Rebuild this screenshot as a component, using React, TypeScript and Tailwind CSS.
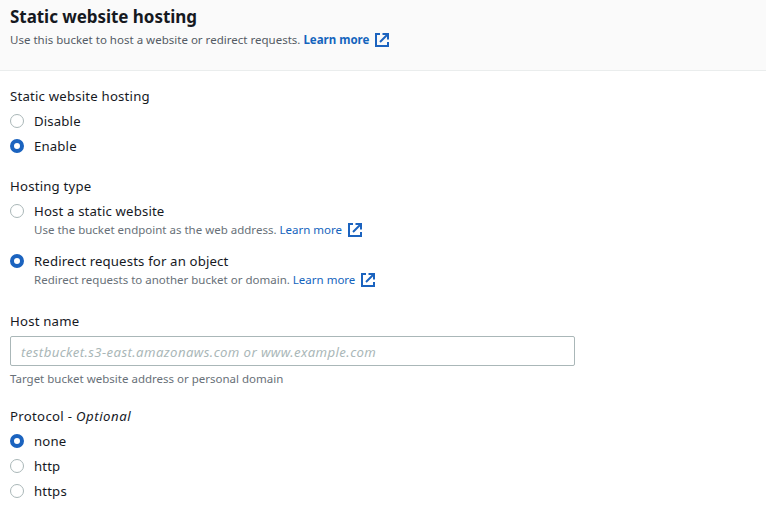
import type { ReactNode } from "react";

function ExternalIcon({ className = "" }: { className?: string }) {
  return (
    <svg viewBox="0 0 14 14" className={`h-[14px] w-[14px] shrink-0 ${className}`} fill="none" stroke="#1b63bf" strokeWidth="2">
      <path d="M5 1H1v12h12V9" />
      <path d="M7.5 1H13v5.5" />
      <path d="M5 9l7.5-7.5" />
    </svg>
  );
}

function Radio({ checked = false, children }: { checked?: boolean; children: ReactNode }) {
  return (
    <label className="flex h-[25px] items-center gap-[10px] text-[13.2px] tracking-[0.15px]">
      <span
        className={
          checked
            ? "mb-px h-[14px] w-[14px] rounded-full border-[4px] border-[#1b63bf] bg-white"
            : "mb-px h-[14px] w-[14px] rounded-full border border-[#aab7b8] bg-white"
        }
      />
      <span>{children}</span>
    </label>
  );
}

function Label({ className = "", children }: { className?: string; children: ReactNode }) {
  return <div className={`h-[25px] text-[13.2px] leading-[25px] tracking-[0.2px] ${className}`}>{children}</div>;
}

function Hint({ children }: { children: ReactNode }) {
  return (
    <div className="-mt-[2px] flex h-[16px] items-center pl-6 text-[11.5px] whitespace-pre text-[#687078]">
      {children}
    </div>
  );
}

export default function App() {
  return (
    <div className="h-[512px] w-[766px] overflow-hidden bg-white font-['Noto_Sans',sans-serif] text-[#16191f]">
      <header className="h-[71px] border-b border-[#eaeded] bg-[#fafafa] pt-[5px] pl-[10px]">
        <h1 className="text-[17px] leading-6 font-bold tracking-[-0.05px]">Static website hosting</h1>
        <p className="mt-[3px] flex h-[16px] items-center text-[11.5px] whitespace-pre text-[#545b64]">
          <span className="tracking-[0.01px]">Use this bucket to host a website or redirect requests. </span>
          <a className="font-bold text-[#1464bd]">Learn more</a>
          <ExternalIcon className="ml-[5.7px]" />
        </p>
      </header>
      <main className="pt-[13px] pl-[10px]">
        <Label>Static website hosting</Label>
        <Radio>Disable</Radio>
        <Radio checked>Enable</Radio>

        <Label className="mt-[15px]">Hosting type</Label>
        <Radio>Host a static website</Radio>
        <Hint>
          Use the bucket endpoint as the web address. <a className="text-[#1464bd]">Learn more</a>
          <ExternalIcon className="ml-[6px]" />
        </Hint>
        <div className="mt-[11px]">
          <Radio checked>Redirect requests for an object</Radio>
        </div>
        <Hint>
          Redirect requests to another bucket or domain. <a className="text-[#1464bd]">Learn more</a>
          <ExternalIcon className="ml-[6px]" />
        </Hint>

        <Label className="mt-[21px]">Host name</Label>
        <input
          className="mt-[2px] block h-[30px] w-[565px] rounded-[2px] border border-[#aab7b8] px-[10px] pt-[2px] text-[13.2px] tracking-[0.4px] placeholder:text-[#aab7b8] placeholder:italic"
          placeholder="testbucket.s3-east.amazonaws.com or www.example.com"
        />
        <p className="mt-[5px] h-[16px] text-[11.5px] leading-4 text-[#687078]">
          Target bucket website address or personal domain
        </p>

        <Label className="mt-[17px]">
          <span className="tracking-[0.3px]">Protocol - </span>
          <em className="tracking-[0.55px]">Optional</em>
        </Label>
        <Radio checked>none</Radio>
        <Radio>http</Radio>
        <Radio>https</Radio>
      </main>
    </div>
  );
}
